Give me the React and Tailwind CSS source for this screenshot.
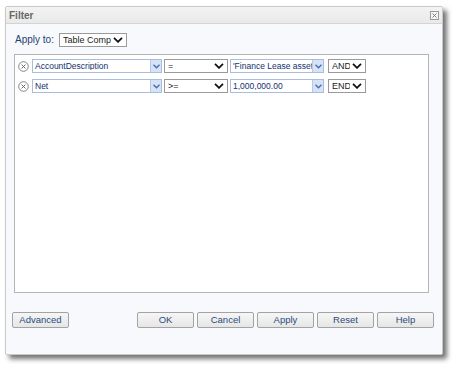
import React from 'react';

const font = { fontFamily: '"Liberation Sans", Tahoma, Arial, sans-serif' };

const Chevron = () => (
  <svg width="10" height="6" viewBox="0 0 10 6" className="shrink-0">
    <path d="M1 0.8 L5 4.8 L9 0.8" fill="none" stroke="#111" strokeWidth="1.8" />
  </svg>
);

const BlueArrow = () => (
  <span className="flex h-full w-[11px] shrink-0 items-center justify-center border-l border-[#b8c9e6] bg-[#d6e2f5]">
    <svg width="7" height="5" viewBox="0 0 7 5">
      <path d="M0.5 0.8 L3.5 3.8 L6.5 0.8" fill="none" stroke="#4a6fae" strokeWidth="1.4" />
    </svg>
  </span>
);

const Combo = ({ text, w }) => (
  <div className={`flex h-[14px] items-center border border-[#a9bddc] bg-white ${w}`}>
    <span className="flex-1 overflow-hidden whitespace-nowrap pl-[2px] text-[8.5px] leading-none text-[#15316b]">{text}</span>
    <BlueArrow />
  </div>
);

const Dropdown = ({ text, w }) => (
  <div className={`flex h-[14px] items-center gap-[2px] border border-[#9a9a9a] bg-white pl-[3px] pr-[3px] ${w}`}>
    <span className="flex-1 overflow-hidden whitespace-nowrap text-[9px] leading-none text-[#222]">{text}</span>
    <Chevron />
  </div>
);

const RemoveIcon = () => (
  <svg width="11" height="11" viewBox="0 0 11 11" className="shrink-0">
    <circle cx="5.5" cy="5.5" r="4.8" fill="#fff" stroke="#777" strokeWidth="0.9" />
    <path d="M3.6 3.6 L7.4 7.4 M7.4 3.6 L3.6 7.4" stroke="#666" strokeWidth="1" />
  </svg>
);

const Row = ({ field, op, value, join }) => (
  <div className="flex items-center">
    <div className="flex w-[17px] justify-center"><RemoveIcon /></div>
    <Combo text={field} w="w-[130px]" />
    <div className="ml-[2px]"><Dropdown text={op} w="w-[64px]" /></div>
    <div className="ml-[2px]"><Combo text={value} w="w-[94px]" /></div>
    <div className="ml-[4px]"><Dropdown text={join} w="w-[38px]" /></div>
  </div>
);

const Btn = ({ children }) => (
  <button className="block h-[16px] w-[57px] rounded-[2px] border border-[#a3a3a3] bg-gradient-to-b from-[#f6f6f6] to-[#e6e6e6] text-[9.5px] leading-none text-[#2a4b7c]">
    {children}
  </button>
);

export default function App() {
  return (
    <div className="h-[369px] w-[457px] bg-white pl-[5px] pt-[6px]" style={font}>
      <div className="flex h-[349px] w-[438px] flex-col rounded-[2px] border border-[#c9c9c9] bg-[#f8f9fc] shadow-[4px_4px_5px_rgba(0,0,0,0.55)]">
        <div className="flex h-[17px] items-center justify-between border-b border-[#d4d4d4] bg-gradient-to-b from-[#f3f3f3] to-[#e9e9e9] pl-[3px] pr-[3px]">
          <span className="text-[10px] font-bold text-[#666]">Filter</span>
          <span className="flex h-[9px] w-[9px] items-center justify-center border border-[#9a9a9a] bg-[#f4f4f4]">
            <svg width="5" height="5" viewBox="0 0 5 5">
              <path d="M0.5 0.5 L4.5 4.5 M4.5 0.5 L0.5 4.5" stroke="#777" strokeWidth="0.9" />
            </svg>
          </span>
        </div>
        <div className="flex flex-col pl-[8px] pr-[13px]">
          <div className="mt-[9px] flex items-center gap-[5px] pl-[1px]">
            <span className="text-[10px] leading-none text-[#1f3d73]">Apply to:</span>
            <Dropdown text="Table Comp" w="w-[68px]" />
          </div>
          <div className="mt-[7px] flex h-[239px] flex-col gap-[6px] border border-[#b5b5b5] bg-white pt-[4px]">
            <Row field="AccountDescription" op="=" value="'Finance Lease asset" join="AND" />
            <Row field="Net" op=">=" value="1,000,000.00" join="END" />
          </div>
        </div>
        <div className="mt-[19px] flex items-center pl-[6px] pr-[8px]">
          <Btn>Advanced</Btn>
          <div className="ml-auto flex gap-[3px]">
            <Btn>OK</Btn>
            <Btn>Cancel</Btn>
            <Btn>Apply</Btn>
            <Btn>Reset</Btn>
            <Btn>Help</Btn>
          </div>
        </div>
      </div>
    </div>
  );
}
